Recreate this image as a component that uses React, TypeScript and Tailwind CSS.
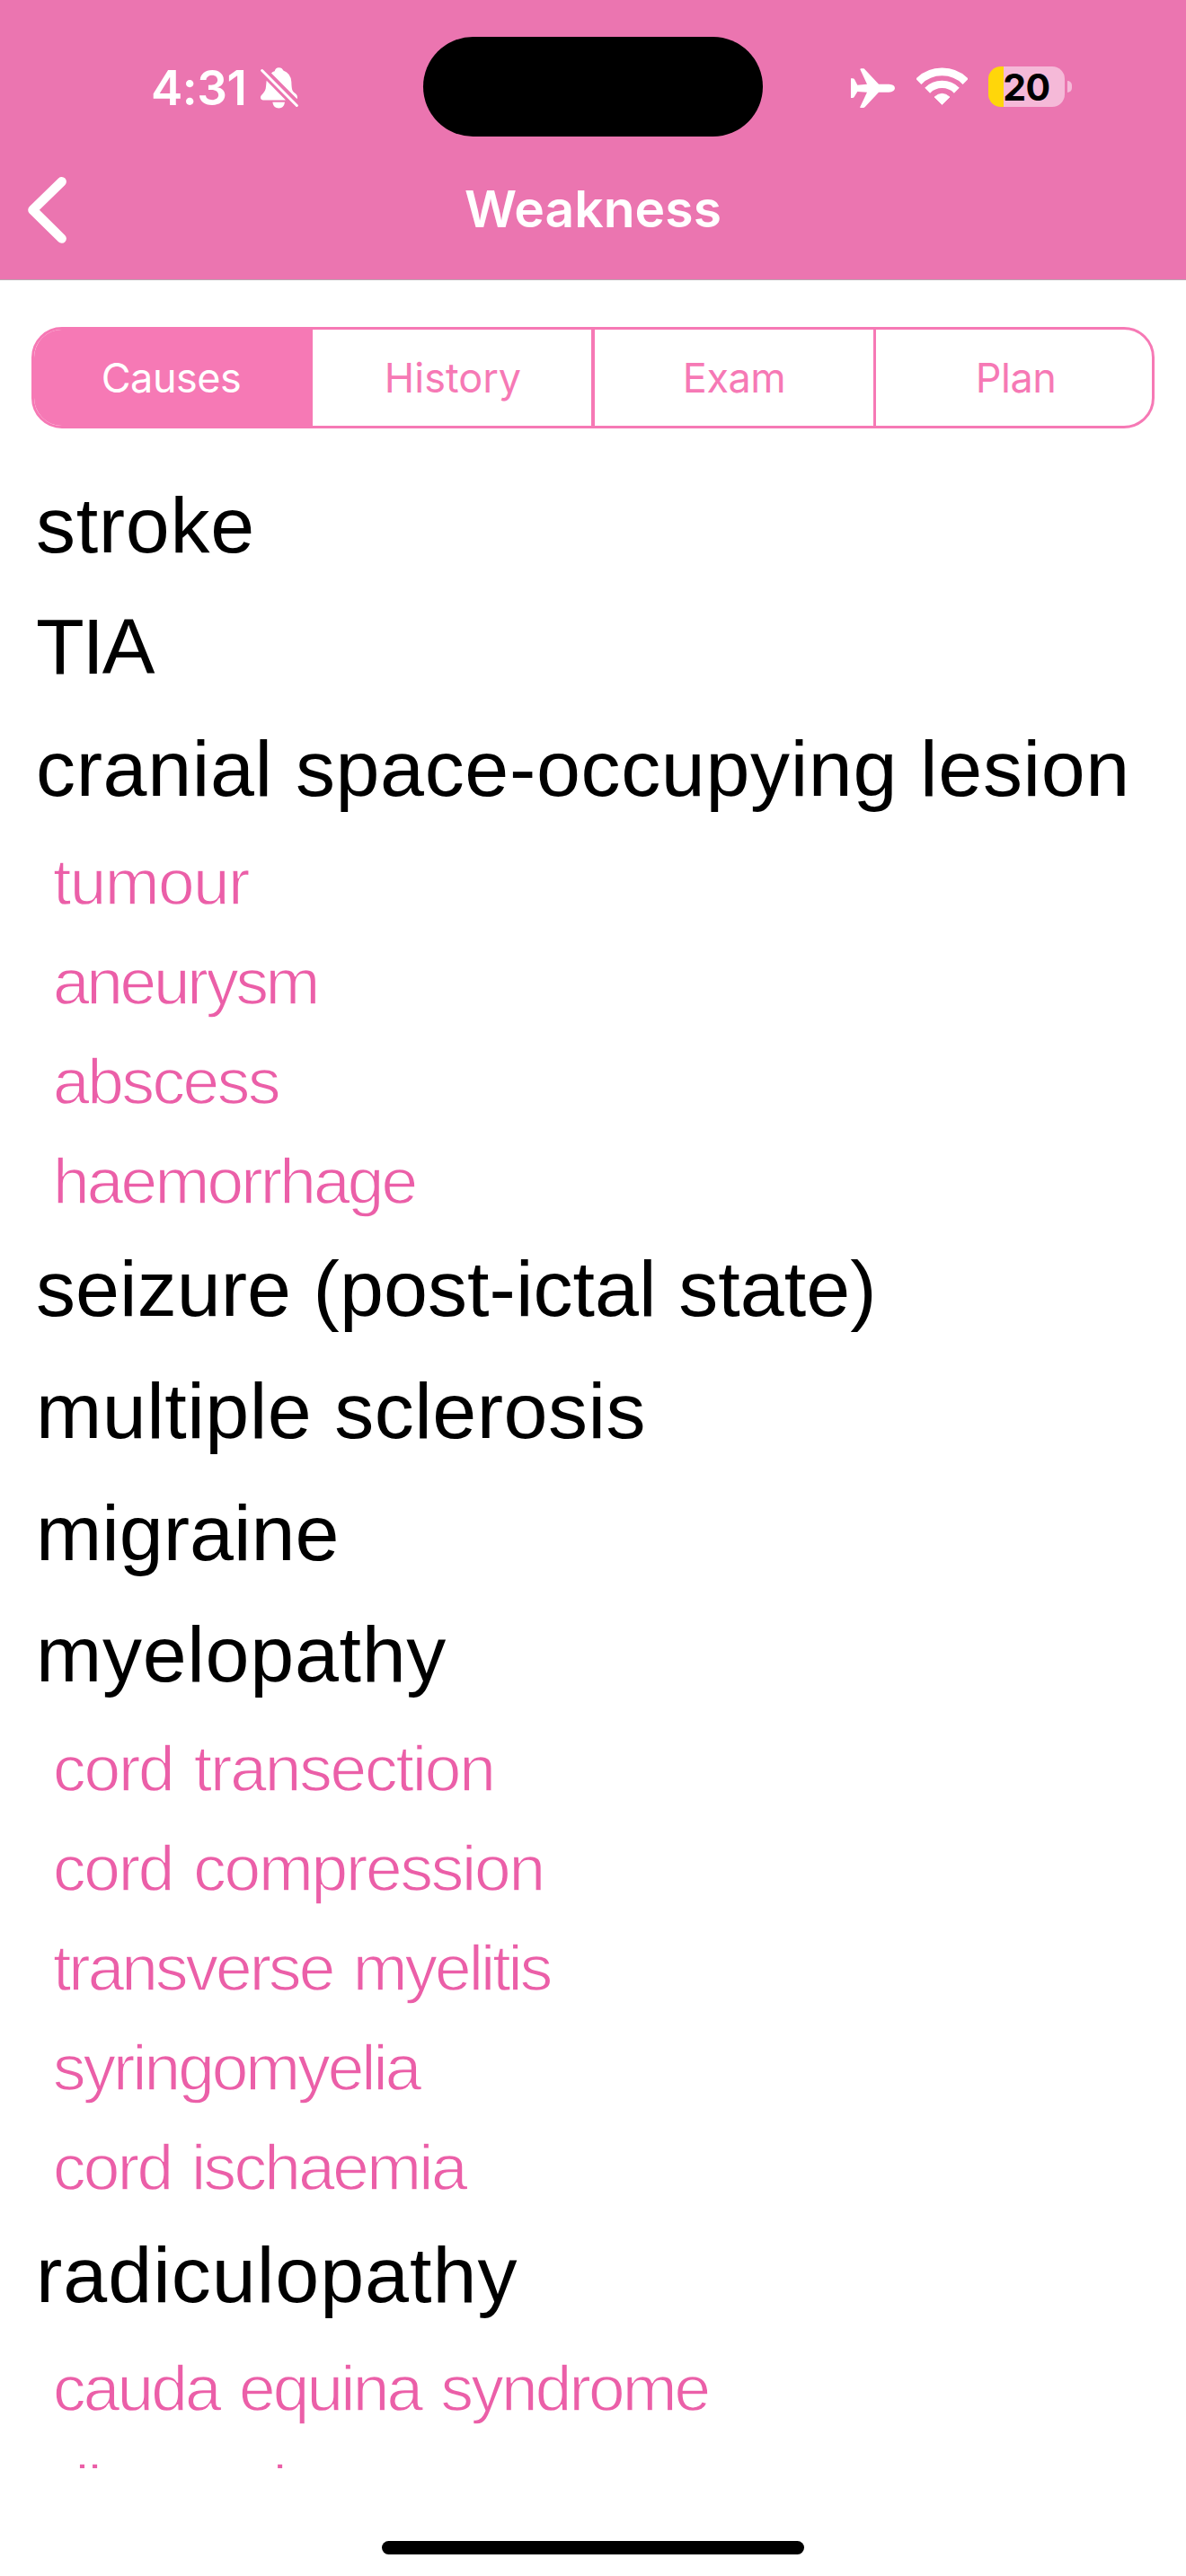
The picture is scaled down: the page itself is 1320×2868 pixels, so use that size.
import React from "react";

type Row = { text: string; sub?: boolean; tracking: string };

const rows: Row[] = [
  { text: "stroke", tracking: "tracking-[0.7px]" },
  { text: "TIA", tracking: "tracking-[-2.2px]" },
  { text: "cranial space-occupying lesion", tracking: "tracking-[0.65px]" },
  { text: "tumour", sub: true, tracking: "tracking-[-1.6px]" },
  { text: "aneurysm", sub: true, tracking: "tracking-[-3.3px]" },
  { text: "abscess", sub: true, tracking: "tracking-[-2.4px]" },
  { text: "haemorrhage", sub: true, tracking: "tracking-[-2.8px]" },
  { text: "seizure (post-ictal state)", tracking: "tracking-[0.06px]" },
  { text: "multiple sclerosis", tracking: "tracking-[0.5px]" },
  { text: "migraine", tracking: "tracking-[0px]" },
  { text: "myelopathy", tracking: "tracking-[0.7px]" },
  { text: "cord transection", sub: true, tracking: "tracking-[-2.1px]" },
  { text: "cord compression", sub: true, tracking: "tracking-[-2.2px]" },
  { text: "transverse myelitis", sub: true, tracking: "tracking-[-2.95px]" },
  { text: "syringomyelia", sub: true, tracking: "tracking-[-3px]" },
  { text: "cord ischaemia", sub: true, tracking: "tracking-[-2.65px]" },
  { text: "radiculopathy", tracking: "tracking-[1px]" },
  { text: "cauda equina syndrome", sub: true, tracking: "tracking-[-2.85px]" },
  { text: "disc prolapse", sub: true, tracking: "tracking-[-2px]" },
];

function BellOff() {
  return (
    <svg className="h-[46px] w-[42px]" viewBox="450 76 126 137" fill="#fff">
      <path d="M486 95Q490 89 497 88Q500 76 511 76Q522 76 526 86Q551 95 553 124C554 150 555 155 567 163Q575 169 572 181Z" />
      <path d="M470 120L534 185H458Q449 184 450 175C451 166 467 160 468 140Z" />
      <path d="M490 192H531Q528 212 511 212Q493 212 490 192Z" />
      <path d="M455 86L571 203" stroke="#fff" strokeWidth="9" strokeLinecap="round" />
    </svg>
  );
}

function Plane() {
  return (
    <svg className="h-[44px] w-[49px]" viewBox="141 78 147 132" fill="#fff">
      <path d="M172 82Q172 79 176 79H182Q186 79 189 83L234 131H268Q288 132 288 145Q287 157 268 158H234L189 206Q186 210 182 210H173Q171 210 172 207L195 158L163 156L152 174Q150 177 147 177H141V112H147Q151 112 153 115L163 134L195 131Z" />
    </svg>
  );
}

function Wifi() {
  return (
    <svg className="h-[42px] w-[57px]" viewBox="0 0 57 42" fill="none" stroke="#fff">
      <path d="M2.3 15.8A37.1 37.1 0 0 1 54.7 15.8" strokeWidth="8.8" />
      <path d="M12.2 25.7A23.1 23.1 0 0 1 44.8 25.7" strokeWidth="8.3" />
      <path d="M28.5 41.4L20 33Q28.5 25.6 37 33Z" fill="#fff" strokeWidth="0.8" strokeLinejoin="round" />
    </svg>
  );
}

function StatusBar() {
  return (
    <div className="grid h-[152px] grid-cols-[471px_378px_471px] pt-[41px]">
      <div className="flex h-[111px] items-start pl-[168px]">
        <span className="mt-[24px] w-[122px] text-[53px] leading-[66px] font-semibold tracking-[-0.5px] text-white">4:31</span>
        <div className="mt-[34px]">
          <BellOff />
        </div>
      </div>
      <div className="h-[111px] rounded-full bg-black" />
      <div className="flex h-[111px] items-start pl-[98px]">
        <div className="mt-[35px]">
          <Plane />
        </div>
        <div className="mt-[34px] ml-[24px]">
          <Wifi />
        </div>
        <div className="mt-[33px] ml-[23px] flex items-center gap-[3px]">
          <div className="flex h-[45px] w-[85px] items-center justify-center rounded-[14px] bg-[linear-gradient(90deg,#ffd60a_17px,#f5b9d8_17px)]">
            <span className="text-[41px] leading-[52px] font-bold tracking-[-0.5px] text-black">20</span>
          </div>
          <div className="h-[13px] w-[5px] rounded-r-full bg-[#f5b9d8]" />
        </div>
      </div>
    </div>
  );
}

function NavBar() {
  return (
    <div className="grid grow grid-cols-[300px_1fr_300px] items-start">
      <svg className="mt-[44px] ml-[26px] h-[76px] w-[50px]" viewBox="26 196 50 76" fill="none" stroke="#fff" strokeWidth="10.4" strokeLinecap="round" strokeLinejoin="round">
        <path d="M68.7 202.2L36.4 233.8L68.7 265.6" />
      </svg>
      <h1 className="mt-[45px] text-center text-[57px] leading-[72px] font-semibold text-white">Weakness</h1>
    </div>
  );
}

function Segments() {
  return (
    <div className="mx-[35px] mt-[52px] flex h-[113px] shrink-0 overflow-hidden rounded-[34px] border-[3px] border-[#f679b5] text-[45px] tracking-[-0.5px] text-[#f679b5]">
      <div className="flex w-[310px] items-center justify-center bg-[#f679b5] pr-[5px] text-white">Causes</div>
      <div className="flex w-[314px] items-center justify-center border-r-4 border-[#f679b5] pl-[2px] tracking-[0px]">History</div>
      <div className="flex w-[313px] items-center justify-center border-r-[3px] border-[#f679b5]">Exam</div>
      <div className="flex grow items-center justify-center pl-[4px]">Plan</div>
    </div>
  );
}

export default function App() {
  return (
    <div className="flex h-[2868px] w-[1320px] flex-col overflow-hidden bg-white font-['Inter',sans-serif]">
      <header className="flex h-[312px] shrink-0 flex-col border-b border-[#b9a9b2] bg-[#eb75b0]">
        <StatusBar />
        <NavBar />
      </header>
      <Segments />
      <ul className="mt-[39.6px] h-[2231.4px] shrink-0 overflow-hidden font-['Liberation_Sans',Arial,sans-serif] whitespace-nowrap">
        {rows.map((row) =>
          row.sub ? (
            <li key={row.text} className="h-[111px] pt-[6px] pl-[59px] text-[73px] leading-[105px] text-[#eb5fa8] [word-spacing:5px] [-webkit-text-stroke:1.3px_#fff]">
              <span className={row.tracking}>{row.text}</span>
            </li>
          ) : (
            <li key={row.text} className="h-[135.6px] pl-[40px] text-[88px] leading-[135.6px] text-black">
              <span className={row.tracking}>{row.text}</span>
            </li>
          ),
        )}
      </ul>
      <div className="mx-auto mt-[81px] h-[15px] w-[470px] shrink-0 rounded-full bg-black" />
    </div>
  );
}
